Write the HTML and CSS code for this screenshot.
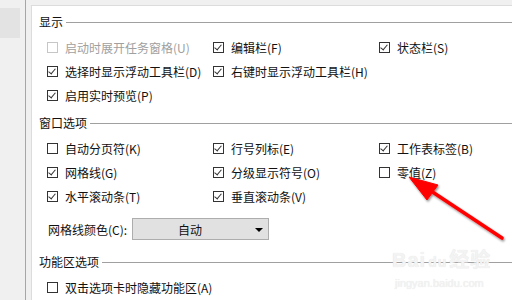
FILE: index.html
```html
<!DOCTYPE html>
<html lang="zh">
<head>
<meta charset="utf-8">
<link rel="stylesheet" href="styles.css">
</head>
<body>
<div class="window">
  <div class="nav"><div class="nav-item"></div></div>
  <div class="gap"></div>
  <div class="panel">
    <section class="group g1">
      <div class="head"><span>显示</span><i class="rule"></i></div>
      <div class="rows">
        <label class="cb disabled"><span class="box"></span>启动时展开任务窗格(U)</label>
        <label class="cb"><span class="box on"></span>编辑栏(F)</label>
        <label class="cb"><span class="box on"></span>状态栏(S)</label>
        <label class="cb"><span class="box on"></span>选择时显示浮动工具栏(D)</label>
        <label class="cb"><span class="box on"></span>右键时显示浮动工具栏(H)</label>
        <span></span>
        <label class="cb"><span class="box on"></span>启用实时预览(P)</label>
      </div>
    </section>
    <section class="group g2">
      <div class="head"><span>窗口选项</span><i class="rule"></i></div>
      <div class="rows">
        <label class="cb"><span class="box"></span>自动分页符(K)</label>
        <label class="cb"><span class="box on"></span>行号列标(E)</label>
        <label class="cb"><span class="box on"></span>工作表标签(B)</label>
        <label class="cb"><span class="box on"></span>网格线(G)</label>
        <label class="cb"><span class="box on"></span>分级显示符号(O)</label>
        <label class="cb"><span class="box"></span>零值(Z)</label>
        <label class="cb"><span class="box on"></span>水平滚动条(T)</label>
        <label class="cb"><span class="box on"></span>垂直滚动条(V)</label>
      </div>
      <div class="color-row">
        <span class="color-label">网格线颜色(C):</span>
        <div class="select"><span class="select-text">自动</span><span class="caret"></span></div>
      </div>
    </section>
    <section class="group g3">
      <div class="head"><span>功能区选项</span><i class="rule"></i></div>
      <div class="rows">
        <label class="cb wide"><span class="box"></span>双击选项卡时隐藏功能区(A)</label>
      </div>
    </section>
  </div>
</div>
<div class="watermark">
  <div class="wm-logo">Bai<span class="wm-du">du</span>经验</div>
  <div class="wm-url">jingyan.baidu.com</div>
</div>
<svg class="arrow" width="512" height="300" viewBox="0 0 512 300">
  <defs>
    <filter id="sh" x="-20%" y="-20%" width="140%" height="140%">
      <feDropShadow dx="1" dy="1.5" stdDeviation="1.2" flood-color="#000" flood-opacity="0.45"/>
    </filter>
  </defs>
  <g filter="url(#sh)" fill="#f00" stroke="#f00">
    <line x1="502" y1="238" x2="428" y2="189" stroke-width="3.6" stroke-linecap="round"/>
    <polygon points="409,177 438,185 427,200" stroke-width="1" stroke-linejoin="round"/>
  </g>
</svg>
</body>
</html>
```
FILE: styles.css
```css
html, body {
  margin: 0;
  padding: 0;
}
body {
  width: 512px;
  height: 300px;
  overflow: hidden;
  position: relative;
  background: #f0f0f0;
  font-family: "Noto Sans CJK SC", "Microsoft YaHei", sans-serif;
  font-size: 12px;
  color: #111;
}
.window {
  display: flex;
  height: 300px;
}
.nav {
  border-right: 1px solid #a6a6a6;
  padding-top: 8px;
  box-sizing: border-box;
  width: 26px;
}
.nav-item {
  width: 20px;
  height: 30px;
  background: #e3e3e3;
}
.gap {
  width: 5px;
}
.panel {
  flex: 1;
  margin-top: 5px;
  background: #fff;
  border-top: 1px solid #dcdcdc;
  border-left: 1px solid #dcdcdc;
  padding: 8px 0 0 7px;
}
.head {
  display: flex;
  align-items: center;
  height: 16px;
  line-height: 16px;
}
.rule {
  flex: 1;
  height: 0;
  border-top: 1px solid #a0a0a0;
  margin-left: 3px;
}
.rows {
  display: grid;
  grid-template-columns: 166px 166px 1fr;
  grid-auto-rows: 24px;
  margin: 5px 0 0 8px;
}
.cb {
  display: flex;
  align-items: center;
  white-space: nowrap;
}
.cb.wide {
  grid-column: 1 / 4;
}
.box {
  width: 11px;
  height: 11px;
  box-sizing: border-box;
  border: 1px solid #333;
  margin-right: 7px;
  flex: none;
  background: #fff;
  position: relative;
}
.box.on::after {
  content: "";
  position: absolute;
  left: 2px;
  top: 0px;
  width: 3px;
  height: 6px;
  border-right: 1px solid #333;
  border-bottom: 1px solid #333;
  transform: rotate(40deg);
}
.disabled {
  color: #a0a0a0;
}
.disabled .box {
  border-color: #c6c6c6;
}
.g2 {
  margin-top: 8px;
}
.g3 {
  margin-top: 14px;
}
.color-row {
  display: flex;
  align-items: center;
  margin: 10px 0 0 9px;
  height: 22px;
}
.color-label {
  width: 84px;
}
.select {
  width: 137px;
  height: 22px;
  box-sizing: border-box;
  background: #e1e1e1;
  border: 1px solid #adadad;
  display: flex;
  align-items: center;
}
.select-text {
  flex: 1;
  text-align: center;
  padding-left: 2px;
}
.caret {
  width: 0;
  height: 0;
  border-left: 4px solid transparent;
  border-right: 4px solid transparent;
  border-top: 4px solid #000;
  margin: 1px 5px 0 10px;
}
.watermark {
  position: absolute;
  left: 392px;
  top: 246px;
  color: #f3f3f3;
  text-shadow: 0 0 1px #e0e0e0;
  font-family: "Liberation Sans", "Noto Sans CJK SC", sans-serif;
}
.wm-logo {
  font-size: 20px;
  font-weight: bold;
  line-height: 28px;
  letter-spacing: 1px;
}
.wm-du {
  font-size: 14px;
  margin: 0 2px;
}
.wm-url {
  font-size: 11px;
  line-height: 14px;
  margin-left: 3px;
}
.arrow {
  position: absolute;
  left: 0;
  top: 0;
  pointer-events: none;
}
```
